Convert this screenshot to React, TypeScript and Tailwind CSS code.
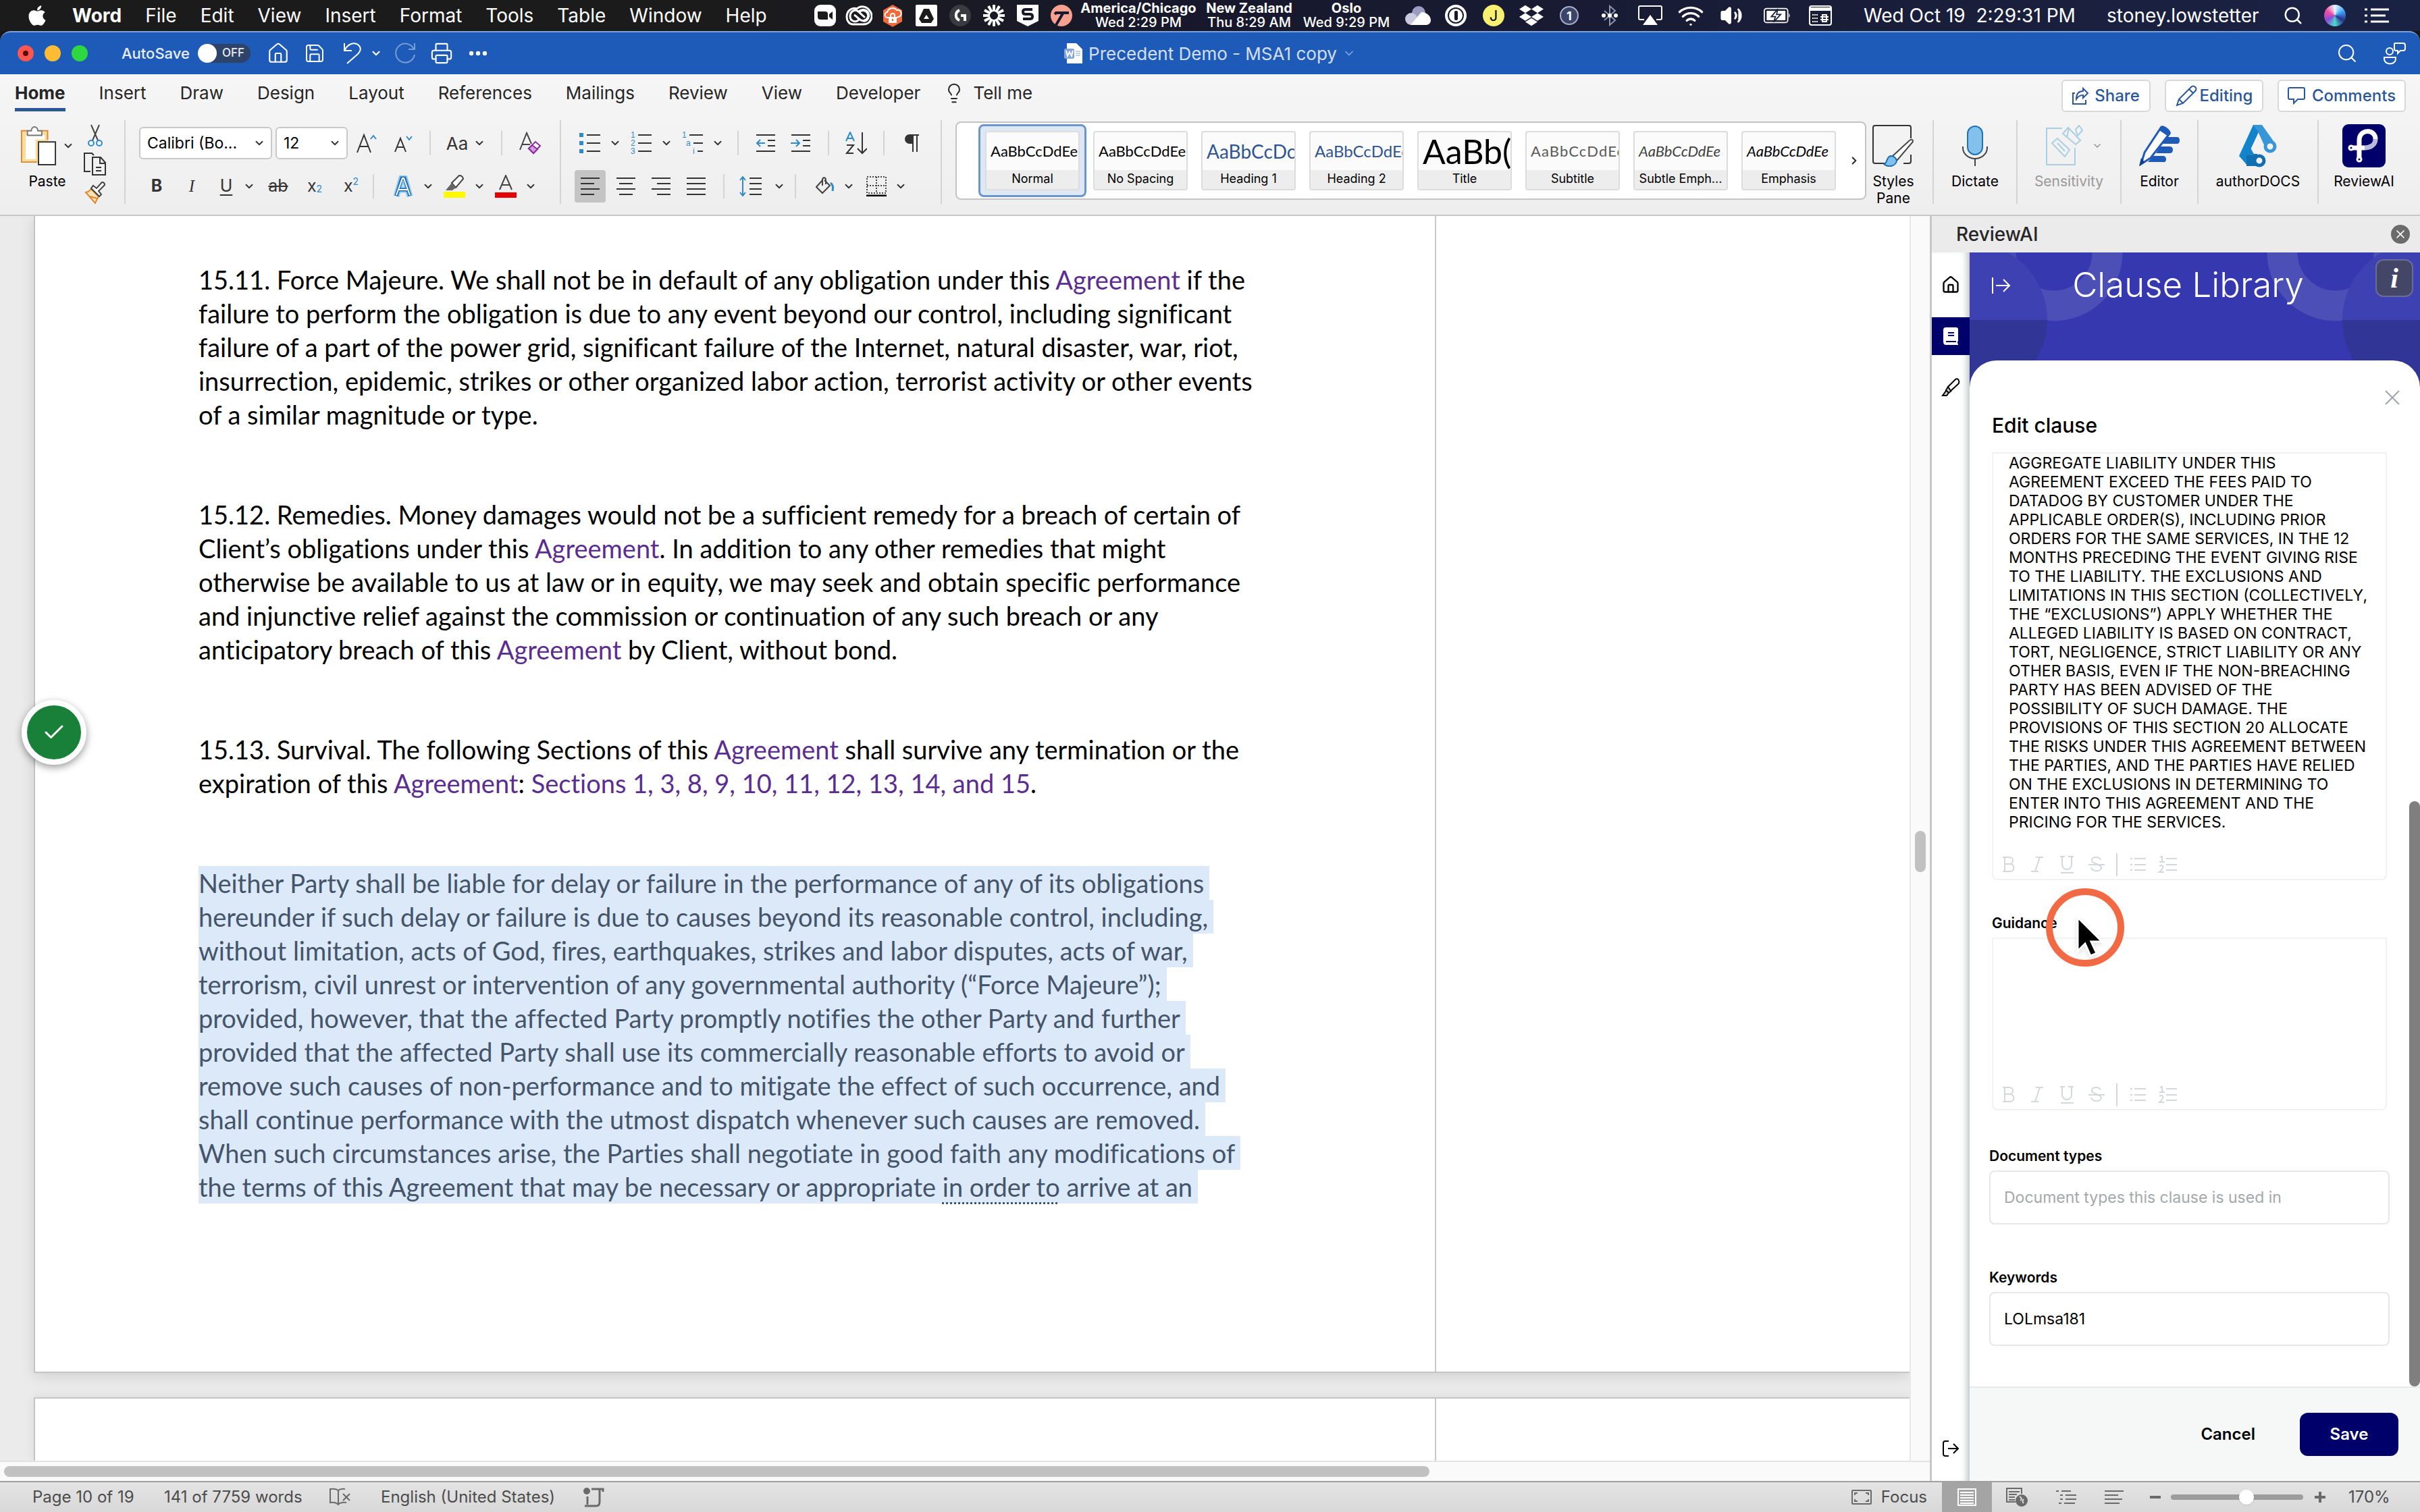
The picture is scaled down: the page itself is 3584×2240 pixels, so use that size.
import { useState } from "react";
import type { ReactNode } from "react";
import {
  Check,
  ChevronDown,
  Ellipsis,
  House,
  Lightbulb,
  Printer,
  Save,
  Search,
  Volume2,
  Wifi,
  X,
} from "lucide-react";
import { FaApple, FaDropbox } from "react-icons/fa";

const MENUS = ["File", "Edit", "View", "Insert", "Format", "Tools", "Table", "Window", "Help"];

const TABS = [
  "Home",
  "Insert",
  "Draw",
  "Design",
  "Layout",
  "References",
  "Mailings",
  "Review",
  "View",
  "Developer",
];

const CLOCKS = [
  { city: "America/Chicago", time: "Wed 2:29 PM", width: "w-[172px]" },
  { city: "New Zealand", time: "Thu 8:29 AM", width: "w-[132px]" },
  { city: "Oslo", time: "Wed 9:29 PM", width: "w-[132px]" },
];

const STYLES = [
  { name: "Normal", sample: "AaBbCcDdEe", look: "text-[22px] text-black" },
  { name: "No Spacing", sample: "AaBbCcDdEe", look: "text-[22px] text-black" },
  { name: "Heading 1", sample: "AaBbCcDc", look: "text-[28px] text-[#2f5496]" },
  { name: "Heading 2", sample: "AaBbCcDdEe", look: "text-[24px] text-[#2f5496]" },
  { name: "Title", sample: "AaBb(", look: "text-[50px] text-black" },
  { name: "Subtitle", sample: "AaBbCcDdEe", look: "text-[22px] tracking-wider text-[#5a5a5a]" },
  { name: "Subtle Emph...", sample: "AaBbCcDdEe", look: "text-[22px] italic text-[#404040]" },
  { name: "Emphasis", sample: "AaBbCcDdEe", look: "text-[22px] italic text-black" },
];

const CLAUSE = `AGGREGATE LIABILITY UNDER THIS
AGREEMENT EXCEED THE FEES PAID TO
DATADOG BY CUSTOMER UNDER THE
APPLICABLE ORDER(S), INCLUDING PRIOR
ORDERS FOR THE SAME SERVICES, IN THE 12
MONTHS PRECEDING THE EVENT GIVING RISE
TO THE LIABILITY. THE EXCLUSIONS AND
LIMITATIONS IN THIS SECTION (COLLECTIVELY,
THE “EXCLUSIONS”) APPLY WHETHER THE
ALLEGED LIABILITY IS BASED ON CONTRACT,
TORT, NEGLIGENCE, STRICT LIABILITY OR ANY
OTHER BASIS, EVEN IF THE NON-BREACHING
PARTY HAS BEEN ADVISED OF THE
POSSIBILITY OF SUCH DAMAGE. THE
PROVISIONS OF THIS SECTION 20 ALLOCATE
THE RISKS UNDER THIS AGREEMENT BETWEEN
THE PARTIES, AND THE PARTIES HAVE RELIED
ON THE EXCLUSIONS IN DETERMINING TO
ENTER INTO THIS AGREEMENT AND THE
PRICING FOR THE SERVICES.`;

const SELECTED_LINES: ReactNode[] = [
  "Neither Party shall be liable for delay or failure in the performance of any of its obligations",
  "hereunder if such delay or failure is due to causes beyond its reasonable control, including,",
  "without limitation, acts of God, fires, earthquakes, strikes and labor disputes, acts of war,",
  "terrorism, civil unrest or intervention of any governmental authority (“Force Majeure”);",
  "provided, however, that the affected Party promptly notifies the other Party and further",
  "provided that the affected Party shall use its commercially reasonable efforts to avoid or",
  "remove such causes of non-performance and to mitigate the effect of such occurrence, and",
  "shall continue performance with the utmost dispatch whenever such causes are removed.",
  "When such circumstances arise, the Parties shall negotiate in good faith any modifications of",
  <>
    the terms of this Agreement that may be necessary or appropriate{" "}
    <span className="underline decoration-dotted decoration-[#44546a] decoration-3 underline-offset-8">
      in order to
    </span>{" "}
    arrive at an
  </>,
];

function Ref({ children }: { children: ReactNode }) {
  return <span className="text-[#5c2d91]">{children}</span>;
}

/* ---------- menu bar ---------- */

function Slot({ children }: { children: ReactNode }) {
  return <span className="flex w-10 shrink-0 items-center justify-center">{children}</span>;
}

function MenuBar() {
  return (
    <header className="flex h-[46px] shrink-0 items-center bg-gradient-to-r from-[#1b1b1c] from-30% via-[#17182c] via-50% to-[#1a2244] text-[28px] text-white">
      <nav className="flex flex-1 items-center gap-[35px] pl-[38px] whitespace-nowrap">
        <FaApple size={34} />
        <span className="font-bold">Word</span>
        {MENUS.map((m) => (
          <span key={m}>{m}</span>
        ))}
      </nav>
      <div className="flex gap-[10px]">
        <Slot>
          <svg width="32" height="32" viewBox="0 0 32 32">
            <rect width="32" height="32" rx="9" fill="#fff" />
            <path d="M5 10h11q4 0 4 4v8H9q-4 0-4-4z" fill="#1b1b1c" />
            <path d="M22 14l5-4v12l-5-4z" fill="#1b1b1c" />
          </svg>
        </Slot>
        <Slot>
          <svg width="40" height="30" viewBox="0 0 40 30" fill="none" stroke="#fff">
            <path d="M11 28h16a12 12 0 0 0 9-20C32 1 22 0 17 5 10 2 2 8 2 17c0 6 4 11 9 11z" strokeWidth="3" />
            <path d="M27 23a8 8 0 1 0-7-13" strokeWidth="4" />
            <path d="M29 18L19 9c-5-4-12 0-12 7 0 8 9 10 13 5M27 23c-6 0-9-6-14-9" strokeWidth="3" />
          </svg>
        </Slot>
        <Slot>
          <svg width="30" height="34" viewBox="0 0 30 34">
            <path d="M15 1l14 8v17l-14 8-14-8V9z" fill="#f26a3c" />
            <path
              d="M9 20H8a4 4 0 0 1-1-8 8 8 0 0 1 14-3 5 5 0 0 1 3 10l-3 1"
              fill="none"
              stroke="#fff"
              strokeWidth="2"
            />
            <rect x="9" y="19" width="12" height="9" fill="#fff" />
            <path d="M12 19v-2a3 3 0 0 1 6 0v2" fill="none" stroke="#fff" strokeWidth="2" />
            <path d="M15 22v3" stroke="#f26a3c" strokeWidth="2" />
          </svg>
        </Slot>
        <Slot>
          <svg width="32" height="32" viewBox="0 0 32 32">
            <rect width="32" height="32" rx="2" fill="#fff" />
            <path d="M12 6h8l7 15-4 6H9l-4-6z" fill="#1b1b1c" />
            <path d="M16 15l4 6h-8z" fill="#fff" />
          </svg>
        </Slot>
        <Slot>
          <svg width="32" height="32" viewBox="0 0 32 32" fill="none" stroke="#fff" strokeWidth="4">
            <circle cx="16" cy="16" r="16" fill="#3a3a42" stroke="none" />
            <path d="M15 8a8 8 0 0 0 0 15M17 16h6v8" />
          </svg>
        </Slot>
        <Slot>
          <svg width="34" height="34" viewBox="0 0 34 34" stroke="#fff" strokeWidth="4">
            <path d="M17 1v10M17 23v10M1 17h10M23 17h10M9 3l5 9M20 22l5 9M3 9l9 5M22 20l9 5M31 9l-9 5M12 20l-9 5M25 3l-5 9M14 22l-5 9" />
          </svg>
        </Slot>
        <Slot>
          <svg width="32" height="32" viewBox="0 0 32 32">
            <path d="M0 0h32v24l-16 8L0 24z" fill="#fff" />
            <path
              d="M23 7H13q-4 0-4 3v1q0 3 4 3h6q4 0 4 3v1q0 3-4 3H9"
              fill="none"
              stroke="#17182c"
              strokeWidth="4"
            />
          </svg>
        </Slot>
        <Slot>
          <svg width="32" height="32" viewBox="0 0 32 32">
            <circle cx="16" cy="16" r="16" fill="#f7a08f" />
            <path d="M6 14l2-2h19M18 13L8 30" fill="none" stroke="#17182c" strokeWidth="4" />
          </svg>
        </Slot>
      </div>
      <div className="ml-2 flex gap-3 text-center text-[20px] leading-[21px] whitespace-nowrap">
        {CLOCKS.map((c) => (
          <div key={c.city} className={c.width}>
            <div className="font-bold">{c.city}</div>
            <div className="font-medium">{c.time}</div>
          </div>
        ))}
      </div>
      <div className="ml-5 flex gap-4">
        <Slot>
          <svg width="38" height="28" viewBox="0 0 38 28">
            <circle cx="20" cy="10" r="10" fill="#9a9cc0" />
            <circle cx="9" cy="19" r="9" fill="#c9cae0" />
            <path d="M8 28L24 9c8 0 14 6 14 12 0 4-3 7-7 7z" fill="#fff" />
          </svg>
        </Slot>
        <Slot>
          <svg width="32" height="32" viewBox="0 0 32 32">
            <circle cx="16" cy="16" r="14" fill="none" stroke="#fff" strokeWidth="4" />
            <circle cx="16" cy="16" r="10" fill="#fff" />
            <rect x="14" y="9" width="5" height="14" rx="2" fill="#17182c" />
          </svg>
        </Slot>
        <Slot>
          <span className="flex size-8 items-center justify-center rounded-full bg-[#f8f070] text-[22px] text-black">J</span>
        </Slot>
        <Slot>
          <FaDropbox size={36} />
        </Slot>
        <Slot>
          <span className="flex size-7 items-center justify-center rounded-full border-2 border-[#a9b0c8] bg-[#3a4468] text-[18px] font-bold">
            1
          </span>
        </Slot>
      </div>
      <div className="ml-5 flex gap-5">
        <Slot>
          <svg width="26" height="32" viewBox="0 0 26 32" stroke="#8d93ad" strokeWidth="2" fill="none">
            <path d="M5 9l16 14-8 7V2l8 7L5 23" />
            <g fill="#fff" stroke="none">
              <circle cx="4" cy="16" r="3" />
              <circle cx="13" cy="16" r="3" />
              <circle cx="22" cy="16" r="3" />
            </g>
          </svg>
        </Slot>
        <Slot>
          <svg width="36" height="30" viewBox="0 0 36 30">
            <path d="M9 21H3q-2 0-2-2V3q0-2 2-2h30q2 0 2 2v16q0 2-2 2h-6" fill="none" stroke="#fff" strokeWidth="2" />
            <path d="M18 14l11 15H7z" fill="#fff" />
          </svg>
        </Slot>
        <Slot>
          <Wifi size={40} strokeWidth={2} />
        </Slot>
        <Slot>
          <Volume2 size={34} fill="#fff" strokeWidth={2} />
        </Slot>
      </div>
      <div className="ml-7 flex gap-6">
        <Slot>
          <svg width="46" height="26" viewBox="0 0 46 26">
            <rect x="1" y="1" width="40" height="24" rx="4" fill="none" stroke="#fff" strokeWidth="2" />
            <rect x="5" y="5" width="32" height="16" fill="#fff" />
            <path d="M43 9q3 4 0 8z" fill="#fff" />
            <path d="M24 2L13 15h7l-3 9 12-13h-7z" fill="#fff" stroke="#1a2040" strokeWidth="2" />
          </svg>
        </Slot>
        <Slot>
          <svg width="34" height="30" viewBox="0 0 34 30">
            <rect x="1" y="1" width="32" height="28" rx="3" fill="none" stroke="#fff" strokeWidth="2" />
            <path d="M1 3h32v5H1z" fill="#fff" />
            <path d="M5 14h8M5 19h8M5 24h8" stroke="#fff" strokeWidth="2" strokeDasharray="2 1" />
            <path d="M20 14h6v10h-6zM17 17h12M17 21h12" stroke="#fff" strokeWidth="2" fill="none" />
          </svg>
        </Slot>
      </div>
      <span className="ml-11 w-[324px] whitespace-pre">Wed Oct 19  2:29:31 PM</span>
      <span className="ml-9 w-[228px]">stoney.lowstetter</span>
      <div className="ml-7 flex gap-[22px] pr-11">
        <Slot>
          <Search size={30} />
        </Slot>
        <Slot>
          <span className="size-8 rounded-full bg-[conic-gradient(#e9f6ff,#3fa9f5,#2b2f8f,#4bd8d0,#8d4bd8,#f04fa0,#e9f6ff)]" />
        </Slot>
        <Slot>
          <svg width="36" height="22" viewBox="0 0 36 22" stroke="#fff" strokeWidth="3">
            <path d="M0 2h4M9 2h27M0 11h4M9 11h22M0 20h4M9 20h27" />
          </svg>
        </Slot>
      </div>
    </header>
  );
}

/* ---------- title bar ---------- */

function TitleBar() {
  const [autoSave, setAutoSave] = useState(false);
  return (
    <div className="flex h-16 shrink-0 items-center rounded-t-2xl border-t-2 border-[#7ba0da] bg-[#1e5ab8] text-white">
      <div className="flex flex-1 items-center">
        <div className="flex gap-4 pl-[26px]">
          <span className="flex size-6 items-center justify-center rounded-full bg-[#fc5650]">
            <span className="size-2 rounded-full bg-[#5c0a08]" />
          </span>
          <span className="size-6 rounded-full bg-[#fdbc34]" />
          <span className="size-6 rounded-full bg-[#2fd840]" />
        </div>
        <label className="ml-[50px] flex items-center gap-3 text-[22px] font-medium text-white/90">
          AutoSave
          <input
            type="checkbox"
            checked={autoSave}
            onChange={(e) => setAutoSave(e.target.checked)}
            className="sr-only"
          />
          <span className="flex h-7 w-[78px] items-center gap-2 rounded-full bg-[#2d4468] text-[17px]">
            <span className="size-7 rounded-full bg-white" />
            {autoSave ? "ON" : "OFF"}
          </span>
        </label>
        <div className="ml-[14px] flex items-center">
          <button className="flex w-[54px] justify-center" aria-label="Home">
            <House size={34} strokeWidth={1.5} />
          </button>
          <button className="flex w-[54px] justify-center" aria-label="Save">
            <Save size={32} strokeWidth={1.5} />
          </button>
          <button className="flex w-[80px] items-center justify-center gap-3 pl-2" aria-label="Undo">
            <svg width="28" height="32" viewBox="0 0 28 32" fill="none" stroke="#fff" strokeWidth="2">
              <path d="M2 1v11h11M2 12C7 2 16-1 22 3c6 5 4 10 0 14L6 31" />
            </svg>
            <ChevronDown size={18} strokeWidth={3} className="shrink-0" />
          </button>
          <button className="flex w-[54px] justify-center text-white/40" aria-label="Redo">
            <svg width="32" height="32" viewBox="0 0 32 32" fill="none" stroke="currentColor" strokeWidth="2">
              <path d="M30 1v9h-9M29 10A14 14 0 1 0 30 18" />
            </svg>
          </button>
          <button className="flex w-[54px] justify-center" aria-label="Print">
            <Printer size={34} strokeWidth={1.5} />
          </button>
          <button className="flex w-[54px] justify-center" aria-label="More">
            <Ellipsis size={34} strokeWidth={2.5} />
          </button>
        </div>
      </div>
      <div className="flex items-center gap-2 pl-5 text-[26px] whitespace-nowrap text-white/80">
        <svg width="28" height="30" viewBox="0 0 28 30">
          <path d="M4 0h14l9 9v21H4z" fill="#fff" />
          <path d="M17 12h7M17 15h7M17 18h7" stroke="#7f9fd8" />
          <rect y="8" width="15" height="15" rx="2" fill="#86a6da" />
          <path d="M3 11l2 8 3-6 3 6 2-8" fill="none" stroke="#fff" strokeWidth="2" />
        </svg>
        Precedent Demo - MSA1 copy
        <ChevronDown size={20} className="opacity-60" />
      </div>
      <div className="flex flex-1 items-center justify-end gap-9 pr-5">
        <Search size={32} strokeWidth={1.5} />
        <svg width="36" height="34" viewBox="0 0 36 34" fill="none" stroke="#fff" strokeWidth="2">
          <circle cx="11" cy="14" r="5" />
          <path d="M3 23h17v2c0 10-17 10-17 0z" />
          <path d="M19 2h12q3 0 3 3v5q0 3-3 3h-4l-4 4v-4h-3q-2 0-2-3V4q0-2 1-2z" />
        </svg>
      </div>
    </div>
  );
}

/* ---------- ribbon ---------- */

function Chev() {
  return <ChevronDown size={18} strokeWidth={2.5} className="shrink-0 text-[#333]" />;
}

function Tool({ label, w, children }: { label: string; w: string; children: ReactNode }) {
  return (
    <button aria-label={label} className={`flex h-12 shrink-0 items-center justify-center ${w}`}>
      {children}
    </button>
  );
}

function Bar() {
  return <span className="h-9 w-[2px] shrink-0 bg-[#d4d4d4]" />;
}

function GroupRule() {
  return <span className="h-[124px] w-[2px] shrink-0 bg-[#d4d4d4]" />;
}

function ListIcon({ kind }: { kind: "bullet" | "number" | "multi" }) {
  return (
    <svg width="32" height="44" viewBox="0 -6 32 44">
      {kind === "bullet" && (
        <>
          <path d="M0 1h6v6H0zM0 13h6v6H0zM0 25h6v6H0z" fill="#2e8bc8" />
          <path d="M11 4h20M11 16h20M11 28h20" stroke="#333" strokeWidth="2" />
        </>
      )}
      {kind === "number" && (
        <>
          <g fill="#2e8bc8" fontSize="12" fontFamily="Liberation Sans">
            <text x="0" y="8">1</text>
            <text x="0" y="20">2</text>
            <text x="0" y="32">3</text>
          </g>
          <path d="M11 4h20M11 16h20M11 28h20" stroke="#333" strokeWidth="2" />
        </>
      )}
      {kind === "multi" && (
        <>
          <g fill="#2e8bc8" fontSize="12" fontFamily="Liberation Sans">
            <text x="0" y="8">1</text>
            <text x="6" y="20">a</text>
            <text x="16" y="32">i</text>
          </g>
          <path d="M11 4h20M17 16h14M23 28h8" stroke="#333" strokeWidth="2" />
        </>
      )}
    </svg>
  );
}

function IndentIcon({ out }: { out?: boolean }) {
  return (
    <svg width="30" height="28" viewBox="0 0 30 28" fill="none" stroke="#333" strokeWidth="2">
      <path d="M1 2h28M18 10h11M18 18h11M1 26h28" />
      {out ? (
        <path d="M14 14H2M7 9l-5 5 5 5" stroke="#2e8bc8" />
      ) : (
        <path d="M0 14h12M8 9l5 5-5 5" stroke="#2e8bc8" />
      )}
    </svg>
  );
}

function ClipboardGroup() {
  return (
    <div className="flex w-[184px] shrink-0 gap-[14px] pt-[6px] pl-[30px]">
      <button className="flex w-20 flex-col items-center gap-2 text-[21px] leading-[25px]">
        <span className="flex h-16 w-20 items-center gap-2">
          <svg width="56" height="62" viewBox="0 0 56 62" fill="none">
            <path d="M6 12h34v12H26v30H6z" fill="#fff" stroke="#fbdc98" strokeWidth="5" />
            <path d="M12 8H2v48h24M32 8h10v14" stroke="#e0862c" strokeWidth="2" />
            <path d="M11 15V8h6a5 6 0 0 1 10 0h6v7z" fill="#fff" stroke="#777" strokeWidth="2" />
            <path d="M28 25h26v35H28z" fill="#fff" stroke="#333" strokeWidth="2" />
          </svg>
          <Chev />
        </span>
        Paste
      </button>
      <div className="flex flex-col gap-2">
        <svg width="34" height="34" viewBox="0 0 34 34" fill="none" strokeWidth="2">
          <path d="M11 1l10 23M23 1L13 24" stroke="#444" />
          <circle cx="11" cy="28" r="4" stroke="#2e8bc8" />
          <circle cx="23" cy="28" r="4" stroke="#2e8bc8" />
        </svg>
        <svg width="34" height="34" viewBox="0 0 34 34" fill="none" stroke="#333" strokeWidth="2">
          <path d="M10 28H1V1h11l3 3" />
          <path d="M13 7h12l7 8v18H13zM24 7v9h8M18 22h8M18 27h8" />
        </svg>
        <svg width="34" height="34" viewBox="0 0 34 34" fill="none" strokeWidth="2">
          <path d="M3 17q5-1 8-5l11 11q-3 5-5 10z" fill="#fde3b4" stroke="#e0862c" />
          <path d="M9 23l11 3" stroke="#e0862c" />
          <path d="M11 11l12 12 3-3-4-5 9-9q0-4-4-4l-8 9-5-4z" fill="#fff" stroke="#444" />
        </svg>
      </div>
    </div>
  );
}

function FontGroup() {
  return (
    <div className="flex w-[643px] shrink-0 flex-col gap-4 pt-[10px] pl-5">
      <div className="flex items-center text-[23px]">
        <select
          aria-label="Font"
          className="h-12 w-[197px] shrink-0 appearance-none rounded-md border-2 border-[#c9c9c9] bg-white pl-[10px]"
        >
          <option>Calibri (Bo...</option>
        </select>
        <span className="-ml-7 flex w-7">
          <Chev />
        </span>
        <select
          aria-label="Font size"
          className="ml-[5px] h-12 w-[107px] shrink-0 appearance-none rounded-md border-2 border-[#c9c9c9] bg-white pl-[10px]"
        >
          <option>12</option>
        </select>
        <span className="-ml-7 flex w-7">
          <Chev />
        </span>
        <Tool label="Grow font" w="w-[58px]">
          <svg width="32" height="30" viewBox="0 0 32 30" fill="none" stroke="#333" strokeWidth="2">
            <path d="M1 29L11 3l10 26M5 20h12" />
            <path d="M21 9l4-5 4 5" stroke="#2e8bc8" />
          </svg>
        </Tool>
        <Tool label="Shrink font" w="w-[50px]">
          <svg width="28" height="28" viewBox="0 0 28 28" fill="none" stroke="#333" strokeWidth="2">
            <path d="M1 27L9 7l8 20M4 20h10" />
            <path d="M18 4l4 5 4-5" stroke="#2e8bc8" />
          </svg>
        </Tool>
        <span className="w-[13px]" />
        <Bar />
        <Tool label="Change case" w="w-[104px] gap-2 text-[26px] text-[#333]">
          Aa
          <Chev />
        </Tool>
        <Bar />
        <Tool label="Clear formatting" w="w-[84px]">
          <svg width="34" height="34" viewBox="0 0 34 34" fill="none" stroke="#444" strokeWidth="2">
            <path d="M1 27L11 2l7 16M4 19h12" />
            <path d="M14 25l10-10 7 6-10 11z" fill="#fff" stroke="#8b2aa0" />
            <path d="M14 25l5-5 8 6-6 6z" fill="#d59ae0" stroke="#8b2aa0" />
          </svg>
        </Tool>
      </div>
      <div className="flex items-center text-[25px] text-[#333]">
        <Tool label="Bold" w="w-[52px] font-bold">B</Tool>
        <Tool label="Italic" w="w-[52px] font-[Liberation_Serif] italic">I</Tool>
        <Tool label="Underline" w="w-[76px] gap-4 pl-2">
          <span className="underline underline-offset-4">U</span>
          <Chev />
        </Tool>
        <Tool label="Strikethrough" w="w-[52px] line-through">ab</Tool>
        <Tool label="Subscript" w="w-[56px]">
          x<sub className="text-[14px] text-[#2e8bc8]">2</sub>
        </Tool>
        <Tool label="Superscript" w="w-[52px]">
          x<sup className="text-[14px] text-[#2e8bc8]">2</sup>
        </Tool>
        <span className="w-[6px]" />
        <Bar />
        <Tool label="Text effects" w="w-[76px] ml-5 gap-3">
          <svg width="32" height="32" viewBox="0 0 32 32" fill="none">
            <path d="M6 31L14 3h4l8 28M9 21h14" stroke="#8cc8f0" strokeWidth="9" />
            <path d="M6 30L14 4h4l8 26M9 21h14" stroke="#1f6cb0" strokeWidth="5" />
            <path d="M6 29L15 4h2l9 25M9 21h14" stroke="#fff" strokeWidth="2" />
          </svg>
          <Chev />
        </Tool>
        <Tool label="Highlight" w="w-[76px] gap-3">
          <svg width="32" height="34" viewBox="0 0 32 34">
            <path d="M0 25h32v9H0z" fill="#fff800" />
            <path d="M12 12L23 1q5 0 6 5L18 19z" fill="#fff" stroke="#444" strokeWidth="2" />
            <path d="M12 12l6 7-5 4H3z" fill="#666" />
          </svg>
          <Chev />
        </Tool>
        <Tool label="Font colour" w="w-[76px] gap-3">
          <svg width="32" height="34" viewBox="0 0 32 34">
            <path d="M0 26h32v8H0z" fill="#e60000" />
            <path d="M7 22L16 1l9 21M10 15h12" fill="none" stroke="#444" strokeWidth="2" />
          </svg>
          <Chev />
        </Tool>
      </div>
    </div>
  );
}

function AlignIcon({ d }: { d: string }) {
  return (
    <svg width="30" height="28" viewBox="0 0 30 28" stroke="#333" strokeWidth="2">
      <path d={d} />
    </svg>
  );
}

function ParagraphGroup() {
  return (
    <div className="flex w-[562px] shrink-0 flex-col gap-4 pt-[10px] pl-5">
      <div className="flex items-center">
        <Tool label="Bullets" w="w-[76px] gap-3">
          <ListIcon kind="bullet" />
          <Chev />
        </Tool>
        <Tool label="Numbering" w="w-[76px] gap-3">
          <ListIcon kind="number" />
          <Chev />
        </Tool>
        <Tool label="Multilevel list" w="w-[76px] gap-3">
          <ListIcon kind="multi" />
          <Chev />
        </Tool>
        <span className="w-[13px]" />
        <Bar />
        <span className="w-[14px]" />
        <Tool label="Decrease indent" w="w-[52px]">
          <IndentIcon out />
        </Tool>
        <Tool label="Increase indent" w="w-[52px]">
          <IndentIcon />
        </Tool>
        <span className="w-[14px]" />
        <Bar />
        <Tool label="Sort" w="w-[80px]">
          <svg width="32" height="34" viewBox="0 0 32 34" fill="none" strokeWidth="2">
            <path d="M1 14L7 1l6 13M3 10h8" stroke="#2e8bc8" />
            <path d="M2 20h10L2 32h10M25 1v30M18 25l7 7 7-7" stroke="#333" />
          </svg>
        </Tool>
        <Bar />
        <Tool label="Show marks" w="w-[80px]">
          <svg width="22" height="26" viewBox="0 0 22 26">
            <path d="M12 14H8A7 7 0 0 1 8 0h4z" fill="#333" />
            <path d="M13 0v26M19 0v26M8 1h14" stroke="#333" strokeWidth="2" />
          </svg>
        </Tool>
      </div>
      <div className="flex items-center text-[#333]">
        <Tool label="Align left" w="w-[46px] rounded bg-[#c4c4c4]">
          <AlignIcon d="M1 2h28M1 10h20M1 18h28M1 26h20" />
        </Tool>
        <Tool label="Centre" w="w-[52px] ml-1">
          <AlignIcon d="M1 2h28M5 10h20M1 18h28M5 26h20" />
        </Tool>
        <Tool label="Align right" w="w-[52px]">
          <AlignIcon d="M1 2h28M9 10h20M1 18h28M9 26h20" />
        </Tool>
        <Tool label="Justify" w="w-[52px]">
          <AlignIcon d="M1 2h28M1 10h28M1 18h28M1 26h28" />
        </Tool>
        <span className="w-[14px]" />
        <Bar />
        <Tool label="Line spacing" w="w-[104px] gap-4 pl-2">
          <svg width="34" height="30" viewBox="0 0 34 30" fill="none" strokeWidth="2">
            <path d="M5 1v28M1 6l4-5 4 5M1 24l4 5 4-5" stroke="#2e8bc8" />
            <path d="M15 3h18M15 11h18M15 19h18M15 27h18" stroke="#333" />
          </svg>
          <Chev />
        </Tool>
        <Bar />
        <Tool label="Shading" w="w-[76px] ml-5 gap-3">
          <svg width="28" height="28" viewBox="0 0 28 28" fill="none" stroke="#444" strokeWidth="2">
            <path d="M10 3v10M10 5L1 15l9 9 11-11-8-8" />
            <path d="M10 5c0-5 5-5 5 0v6" />
            <path d="M22 9c4 3 4 6 3 12" stroke="#2e8bc8" strokeWidth="3" />
          </svg>
          <Chev />
        </Tool>
        <Tool label="Borders" w="w-[76px] gap-3">
          <svg width="30" height="30" viewBox="0 0 30 30" fill="none" stroke="#444" strokeWidth="2">
            <path d="M1 1h28v24H1zM15 1v24M1 14h28" strokeDasharray="2 2" />
            <path d="M0 29h30" stroke="#000" strokeWidth="3" />
          </svg>
          <Chev />
        </Tool>
      </div>
    </div>
  );
}

function StyleGallery() {
  return (
    <div className="mt-[2px] ml-5 flex h-[116px] min-w-0 flex-1 items-center rounded-lg border-2 border-[#c4c4c4] bg-white pl-8">
      {STYLES.map((s, i) => (
        <button
          key={s.name}
          className={
            i === 0
              ? "h-[108px] w-40 shrink-0 rounded-lg border-[3px] border-[#6d95cc] bg-[#dde8f4] p-[7px]"
              : "h-[108px] w-40 shrink-0 p-[10px]"
          }
        >
          <span className="flex h-full flex-col overflow-hidden rounded border-2 border-[#dcdcdc] bg-[#fbfbfb]">
            <span
              className={`flex flex-1 items-center overflow-hidden pl-[6px] font-[Lato] leading-none whitespace-nowrap ${s.look}`}
            >
              {s.sample}
            </span>
            <span className="h-7 bg-[#ededed] text-center text-[18px] leading-[26px] whitespace-nowrap">{s.name}</span>
          </span>
        </button>
      ))}
      <ChevronDown size={18} strokeWidth={3} className="m-auto -rotate-90 text-[#333]" />
    </div>
  );
}

function BigTool({ label, w, muted, children }: { label: string; w: string; muted?: boolean; children: ReactNode }) {
  return (
    <button
      className={`flex shrink-0 flex-col items-center gap-2 pt-[6px] text-[21px] leading-[25px] ${w} ${muted ? "text-[#999]" : ""}`}
    >
      <span className="flex h-16 items-center">{children}</span>
      {label}
    </button>
  );
}

function Ribbon() {
  return (
    <div className="shrink-0 border-b-2 border-[#c8c8c8] bg-gradient-to-b from-[#f6f6f6] to-[#eeeeee]">
      <div className="flex h-[68px] items-start pt-2 pr-[21px] pl-[22px] text-[#262626]">
        <nav className="flex flex-1 items-center gap-[50px] text-[26px] leading-10 whitespace-nowrap">
          {TABS.map((t, i) => (
            <a
              key={t}
              href="#"
              className={
                i === 0
                  ? "border-b-[5px] border-[#2b579a] pb-[2px] font-bold"
                  : "border-b-[5px] border-transparent pb-[2px]"
              }
            >
              {t}
            </a>
          ))}
          <a href="#" className="-ml-4 flex items-center gap-3 border-b-[5px] border-transparent pb-[2px]">
            <Lightbulb size={32} strokeWidth={1.5} />
            Tell me
          </a>
        </nav>
        <div className="flex gap-[21px] text-[24px] font-medium text-[#2b579a]">
          <button className="flex h-12 w-[132px] items-center justify-center gap-2 rounded-md border-2 border-[#d8d8d8] bg-white">
            <svg width="25" height="26" viewBox="0 0 25 26" fill="none" stroke="currentColor" strokeWidth="2">
              <path d="M4 9H1v16h19v-6" />
              <path d="M16 2l7 7-7 7v-4c-5 0-7 2-10 6 0-7 3-12 10-12z" />
            </svg>
            Share
          </button>
          <button className="flex h-12 w-[146px] items-center justify-center gap-1 rounded-md border-2 border-[#d8d8d8] bg-white">
            <svg width="32" height="32" viewBox="0 0 32 32" fill="none" stroke="currentColor" strokeWidth="2">
              <path d="M2 30l3-9L23 3q3-3 6 0t0 6L11 27zM20 6l6 6M5 21l6 6" />
            </svg>
            Editing
          </button>
          <button className="flex h-12 w-[190px] items-center justify-center gap-[10px] rounded-md border-2 border-[#d8d8d8] bg-white">
            <svg width="26" height="26" viewBox="0 0 26 26" fill="none" stroke="currentColor" strokeWidth="2">
              <path d="M3 1h20q2 0 2 2v13q0 2-2 2h-8l-6 6v-6H3q-2 0-2-2V3q0-2 2-2z" />
            </svg>
            Comments
          </button>
        </div>
      </div>
      <div className="flex h-[140px] items-start">
        <ClipboardGroup />
        <GroupRule />
        <FontGroup />
        <GroupRule />
        <ParagraphGroup />
        <GroupRule />
        <StyleGallery />
        <BigTool label="Styles Pane" w="w-[80px]">
          <svg width="64" height="62" viewBox="0 0 64 62" fill="none" strokeWidth="2">
            <path d="M58 20V4q0-3-3-3H5Q2 1 2 4v50q0 3 3 3h14M58 44v10q0 3-3 3h-8" stroke="#333" />
            <path d="M30 47L56 23q5-3 5 2L38 52z" fill="#fff" stroke="#444" />
            <path d="M18 58c6-2 3-10 10-12q7 0 9 7c-1 8-12 11-19 5z" fill="#7fc0ee" stroke="#1f6cb0" />
          </svg>
        </BigTool>
        <span className="w-[18px] shrink-0" />
        <GroupRule />
        <BigTool label="Dictate" w="w-[122px]">
          <svg width="38" height="60" viewBox="0 0 38 60" fill="none" strokeWidth="2">
            <rect x="8" y="1" width="22" height="42" rx="11" fill="#84c0ec" stroke="#2272b4" />
            <path d="M1 31v2a18 16 0 0 0 36 0v-2M19 49v11" stroke="#444" />
          </svg>
        </BigTool>
        <GroupRule />
        <BigTool label="Sensitivity" w="w-[152px]" muted>
          <span className="ml-4 flex items-center gap-3">
            <svg width="56" height="62" viewBox="0 0 56 62" fill="none" stroke="#aacfe0" strokeWidth="2">
              <path d="M24 5H1v54h42V34" />
              <path d="M9 27l8-7 18 17-7 10zM17 27l11 12" />
              <path d="M25 13l8-9 18 19-7 6zM34 5l-3 14M44 7l5-6 5 7-7 8z" />
            </svg>
            <ChevronDown size={16} strokeWidth={2.5} />
          </span>
        </BigTool>
        <GroupRule />
        <BigTool label="Editor" w="w-[112px]">
          <svg width="62" height="62" viewBox="0 0 62 62">
            <path
              d="M40 18h17q4 0 4 5t-4 5H34zM32 32h14q5 0 5 5t-5 5H26zM22 46h14q5 0 5 5t-5 4H14z"
              fill="#1e5ab8"
            />
            <path d="M34 3q8 0 12 10L18 49 4 58l5-17z" fill="#fff" stroke="#1e5ab8" strokeWidth="3" />
            <path d="M36 1q10 4 12 11l-4 5-13-9z" fill="#1e5ab8" />
            <path d="M4 49l5 6-8 6z" fill="#123f8c" />
          </svg>
        </BigTool>
        <GroupRule />
        <BigTool label="authorDOCS" w="w-[176px]">
          <svg width="58" height="64" viewBox="0 0 58 64">
            <path d="M22 1h13L15 44l8 18h-9L1 47z" fill="#1384cc" />
            <path d="M22 1h13l17 24-11 12-12-26z" fill="#3797d6" />
            <path d="M12 44h16v18H12z" fill="#0f6fb0" />
            <path d="M15 30l9 16H12z" fill="#1384cc" />
            <circle cx="47" cy="33" r="7" fill="#f2f2f2" stroke="#3797d6" strokeWidth="5" />
            <circle cx="31" cy="54" r="7" fill="#f2f2f2" stroke="#0f6fb0" strokeWidth="5" />
          </svg>
        </BigTool>
        <GroupRule />
        <BigTool label="ReviewAI" w="w-[134px] mr-4">
          <svg width="64" height="64" viewBox="0 0 64 64" fill="none">
            <rect width="64" height="64" rx="9" fill="#00006b" />
            <path d="M49 22c0 9-8 13-16 13" stroke="#b9b9dd" strokeWidth="7" />
            <path d="M25 50V24c0-18 24-17 24-2M33 35H14" stroke="#fff" strokeWidth="7" />
            <circle cx="25" cy="52" r="3" fill="#00006b" stroke="#fff" strokeWidth="3" />
            <circle cx="13" cy="35" r="3" fill="#00006b" stroke="#fff" strokeWidth="3" />
          </svg>
        </BigTool>
      </div>
    </div>
  );
}

/* ---------- document ---------- */

function DocumentArea() {
  return (
    <main className="flex min-w-0 flex-1 flex-col bg-[#fafafa]">
      <div className="flex min-h-0 flex-1">
        <div className="relative flex flex-1 flex-col overflow-hidden bg-[#ebebeb] pl-[50px]">
          <section className="flex border-b-2 border-l-2 border-[#c4c4c4] bg-white shadow-[0_4px_20px_rgba(0,0,0,0.12)]">
            <article className="flex flex-1 flex-col gap-[98px] pt-[69px] pb-[249px] pl-[242px] font-[Lato] text-[38px] leading-[50px] whitespace-nowrap text-black [font-variant-ligatures:none]">
              <p>
                15.11. Force Majeure. We shall not be in default of any obligation under this <Ref>Agreement</Ref> if the
                <br />
                failure to perform the obligation is due to any event beyond our control, including significant
                <br />
                failure of a part of the power grid, significant failure of the Internet, natural disaster, war, riot,
                <br />
                insurrection, epidemic, strikes or other organized labor action, terrorist activity or other events
                <br />
                of a similar magnitude or type.
              </p>
              <p>
                15.12. Remedies. Money damages would not be a sufficient remedy for a breach of certain of
                <br />
                Client’s obligations under this <Ref>Agreement</Ref>. In addition to any other remedies that might
                <br />
                otherwise be available to us at law or in equity, we may seek and obtain specific performance
                <br />
                and injunctive relief against the commission or continuation of any such breach or any
                <br />
                anticipatory breach of this <Ref>Agreement</Ref> by Client, without bond.
              </p>
              <p>
                15.13. Survival. The following Sections of this <Ref>Agreement</Ref> shall survive any termination or the
                <br />
                expiration of this <Ref>Agreement</Ref>: <Ref>Sections 1, 3, 8, 9, 10, 11, 12, 13, 14, and 15</Ref>.
              </p>
              <div className="text-[#44546a]">
                {SELECTED_LINES.map((line, i) => (
                  <p key={i} className="w-fit bg-[#dce9f8] pr-2">
                    {line}
                  </p>
                ))}
              </div>
            </article>
            <div className="w-[703px] border-l-2 border-[#c8c8c8]" />
          </section>
          <section className="mt-9 flex flex-1 border-t-2 border-l-2 border-[#c4c4c4] bg-white shadow-[0_0_16px_rgba(0,0,0,0.08)]">
            <div className="flex-1" />
            <div className="w-[703px] border-l-2 border-[#c8c8c8]" />
          </section>
          <span className="absolute top-[717px] left-8 flex size-24 items-center justify-center rounded-full border-8 border-white bg-[#188038] text-white shadow-[0_4px_12px_rgba(0,0,0,0.4)]">
            <Check size={36} strokeWidth={2} />
          </span>
        </div>
        <div className="flex w-[30px] flex-col items-center border-l-2 border-[#e8e8e8] pt-[911px]">
          <span className="h-[61px] w-4 rounded-full bg-[#c1c1c1]" />
        </div>
      </div>
      <div className="flex h-[30px] items-center border-t-2 border-[#e4e4e4] pl-[6px]">
        <span className="h-4 w-[2111px] rounded-full bg-[#c1c1c1]" />
      </div>
    </main>
  );
}

/* ---------- ReviewAI pane ---------- */

function EditorToolbar() {
  return (
    <svg width="264" height="34" viewBox="0 0 264 34" fill="none" stroke="#d4d8da" strokeWidth="2">
      <path d="M5 6h10a5 5 0 0 1 0 10H8h8a5 5 0 0 1 0 11H5M8 6v21" />
      <path d="M54 6h11M47 27h11M60 6l-7 21" />
      <path d="M90 5h7M102 5h8M93 5v12a7 7 0 0 0 14 0V5M91 29h19" />
      <path d="M150 10c-2-6-14-5-13 1 1 5 13 5 14 10 0 7-14 7-15 0M132 17h24" />
      <path d="M174 0v34" />
      <path d="M194 8h3M200 8h17M194 17h3M200 17h17M194 25h3M200 25h17" />
      <path d="M238 6l3-1v8M237 13h8M237 19c6-3 8 2 0 9h7M247 8h16M247 17h16M247 25h16" />
    </svg>
  );
}

function RichBox({ id, size, value, label }: { id: string; size: string; value: string; label?: string }) {
  return (
    <div className="rounded-b-lg border-2 border-[#f1f2f3]">
      <textarea
        id={id}
        defaultValue={value}
        aria-label={label}
        className={`block w-full resize-none overflow-hidden pl-[23px] text-[23px] leading-7 whitespace-pre outline-none ${size}`}
      />
      <div className="pt-1 pb-1 pl-[9px]">
        <EditorToolbar />
      </div>
    </div>
  );
}

function PaneHeader() {
  return (
    <div className="relative h-[200px] shrink-0 overflow-hidden bg-[#3638b0] text-white">
      <svg className="absolute inset-0" width="100%" height="200" viewBox="0 0 667 200" preserveAspectRatio="none">
        <g fill="none" stroke="#4c50b6" strokeWidth="45">
          <circle cx="125" cy="0" r="79" />
          <circle cx="542" cy="0" r="79" />
        </g>
        <circle cx="0" cy="100" r="115" fill="#3d41b1" />
        <circle cx="667" cy="100" r="115" fill="#3d41b1" />
        <path d="M0 100h115a115 115 0 0 1-115 115zM667 100H552a115 115 0 0 0 115 115z" fill="#303596" />
      </svg>
      <div className="relative flex items-start pt-[10px] pr-[10px] pl-8">
        <svg className="mt-[23px]" width="30" height="32" viewBox="0 0 30 32" fill="none" stroke="#fff" strokeWidth="2">
          <path d="M2 4v24M7 16h20M18 7l9 9-9 9" />
        </svg>
        <h1 className="flex-1 pt-[9px] pr-4 text-center text-[51px] leading-[58px] font-light">Clause Library</h1>
        <button
          aria-label="Info"
          className="size-14 rounded-xl border-2 border-[#6a6c98] bg-[#444668] font-[Liberation_Serif] text-[42px] leading-none font-bold italic"
        >
          i
        </button>
      </div>
    </div>
  );
}

function Rail() {
  return (
    <nav className="flex w-14 shrink-0 flex-col items-center bg-white pt-[20px] pb-9 shadow-[inset_-10px_0_12px_-8px_rgba(60,80,90,0.45)]">
      <a href="#" aria-label="Home" className="flex h-14 items-center">
        <House size={28} strokeWidth={2} />
      </a>
      <a href="#" aria-label="Clause library" className="mt-5 flex h-14 w-full items-center justify-center bg-[#00006b]">
        <svg width="24" height="26" viewBox="0 0 24 26">
          <path d="M5 0h15q3 0 3 3v17q-2 2 0 5v1H5q-4 0-4-5V4q0-4 4-4z" fill="#fff" />
          <path d="M8 8h9M8 12h9M5 21h15" stroke="#00006b" strokeWidth="2" />
        </svg>
      </a>
      <a href="#" aria-label="Draft" className="mt-5 flex h-14 items-center">
        <svg width="28" height="28" viewBox="0 0 28 28" fill="none" stroke="#000" strokeWidth="2">
          <path d="M10 13L21 2q4-2 5 2 1 3-1 5L14 19z" />
          <path d="M10 13l-3 5 4 4 4-3M7 19l-5 7h6l3-4" fill="#000" fillOpacity="0.2" />
        </svg>
      </a>
      <a href="#" aria-label="Sign out" className="mt-auto">
        <svg width="26" height="24" viewBox="0 0 26 24" fill="none" stroke="#000" strokeWidth="2">
          <path d="M10 1H5Q2 1 2 4v16q0 3 3 3h5M9 12h15M17 5l7 7-7 7" />
        </svg>
      </a>
    </nav>
  );
}

function ReviewPane() {
  return (
    <aside className="flex w-[726px] shrink-0 flex-col border-l-[3px] border-[#c8c8c8] bg-white">
      <div className="flex h-[54px] shrink-0 items-center justify-between bg-[#ebebeb] pr-[15px] pl-9 text-[28px] font-medium text-[#262626]">
        ReviewAI
        <button aria-label="Close pane" className="flex size-7 items-center justify-center rounded-full bg-[#6b6b6b] text-white">
          <X size={20} />
        </button>
      </div>
      <div className="flex min-h-0 flex-1">
        <Rail />
        <div className="flex min-w-0 flex-1 flex-col">
          <PaneHeader />
          <form
            className="relative -mt-10 flex min-h-0 flex-1 flex-col rounded-t-[40px] bg-white"
            onSubmit={(e) => e.preventDefault()}
          >
            <div className="flex justify-end pt-9 pr-[22px]">
              <button type="button" aria-label="Close" className="text-[#a0a4a8]">
                <X size={38} strokeWidth={1.25} />
              </button>
            </div>
            <h2 className="pt-1 pl-[33px] text-[30px] leading-9 font-medium">Edit clause</h2>
            <div className="mt-[22px] flex min-h-0 flex-1">
              <div className="min-w-0 flex-1 overflow-hidden pr-[29px] pl-[29px]">
                <div className="px-1">
                  <div className="-mt-[2px] pt-[2px]">
                    <RichBox id="clause" size="h-[588px]" value={CLAUSE} label="Clause text" />
                  </div>
                  <label htmlFor="guidance" className="mt-[52px] mb-[9px] block text-[21px] leading-6 font-semibold">
                    Guidance
                  </label>
                  <RichBox id="guidance" size="h-[210px]" value="" />
                </div>
                <label htmlFor="types" className="mt-14 mb-[9px] block text-[21px] leading-6 font-semibold">
                  Document types
                </label>
                <input
                  id="types"
                  placeholder="Document types this clause is used in"
                  className="h-20 w-full rounded-lg border-2 border-[#e6e7e8] px-5 text-[23px] placeholder:text-[#a4a8ab]"
                />
                <label htmlFor="keywords" className="mt-[67px] mb-[9px] block text-[21px] leading-6 font-semibold">
                  Keywords
                </label>
                <input
                  id="keywords"
                  defaultValue="LOLmsa181"
                  className="h-20 w-full rounded-lg border-2 border-[#e6e7e8] px-5 text-[23px]"
                />
              </div>
              <div className="flex w-4 flex-col justify-end">
                <span className="h-[867px] rounded-full bg-[#7f7f7f]" />
              </div>
            </div>
            <div className="flex h-[140px] shrink-0 items-center justify-end gap-[66px] border-t-2 border-[#e6e8e9] bg-[#f6f8f8] pr-8 text-[24px] font-semibold">
              <button type="button">Cancel</button>
              <button className="h-16 w-[146px] rounded-xl bg-[#00006b] text-white">Save</button>
            </div>
          </form>
        </div>
      </div>
    </aside>
  );
}

/* Click marker drawn round the pointer */
function Pointer() {
  return (
    <svg className="pointer-events-none absolute top-[1316px] right-[438px]" width="116" height="116" viewBox="0 0 116 116">
      <circle cx="58" cy="58" r="53" fill="none" stroke="#f26a43" strokeWidth="10" />
      <path
        d="M47 43v50l11-11 8 18 9-4-8-17h16z"
        fill="#000"
        stroke="#fff"
        strokeWidth="3"
        className="drop-shadow-md"
      />
    </svg>
  );
}

/* ---------- status bar ---------- */

function StatusBar() {
  const [zoom, setZoom] = useState(58);
  return (
    <footer className="flex h-[46px] shrink-0 items-center border-t-2 border-[#a0a0a0] bg-gradient-to-b from-[#e4e4e4] to-[#d8d8d8] pl-12 text-[24px] whitespace-nowrap text-[#4c4c4c]">
      <span className="w-[195px]">Page 10 of 19</span>
      <span className="w-[245px]">141 of 7759 words</span>
      <svg width="32" height="28" viewBox="0 0 32 28" fill="none" stroke="#6a6a6a" strokeWidth="2">
        <path d="M13 4q-4-3-12-2v20q8-1 12 3 3-4 12-3M13 4v21M13 4q3-3 10-2" />
        <path d="M20 9l10 10M30 9L20 19" />
      </svg>
      <span className="ml-11 w-[300px]">English (United States)</span>
      <svg width="32" height="30" viewBox="0 0 32 30" fill="none" stroke="#6a6a6a" strokeWidth="3">
        <circle cx="5" cy="6" r="5" fill="#6a6a6a" stroke="none" />
        <path d="M12 3h17v4M24 3v19q0 6-5 6H2M6 14v12" />
      </svg>
      <div className="ml-auto flex h-full items-center">
        <button className="flex items-center gap-[14px] pr-[22px]">
          <svg width="30" height="22" viewBox="0 0 30 22" fill="none" stroke="#6a6a6a" strokeWidth="2">
            <rect x="1" y="1" width="28" height="20" rx="1" />
            <path d="M5 8V5h4M21 5h4v3M5 14v3h4M21 17h4v-3" />
          </svg>
          Focus
        </button>
        <button aria-label="Print layout" className="flex h-full w-[74px] items-center justify-center bg-[#a4a4a4]">
          <svg width="28" height="26" viewBox="0 0 28 26" fill="none" stroke="#fff" strokeWidth="2">
            <path d="M1 1h26v24H1zM4 6h20M4 10h20M4 14h20M4 18h20M4 22h20" />
          </svg>
        </button>
        <button aria-label="Web layout" className="flex w-[74px] justify-center">
          <svg width="32" height="28" viewBox="0 0 32 28" fill="none" stroke="#6a6a6a" strokeWidth="2">
            <path d="M14 21H1V1h22v8M4 6h16M4 10h12M4 14h9M4 18h9" />
            <circle cx="23" cy="19" r="8" fill="#6a6a6a" />
            <path d="M20 13q5 3 1 6M26 17q-3 3 0 6" stroke="#dcdcdc" />
          </svg>
        </button>
        <button aria-label="Outline" className="flex w-[72px] justify-center">
          <svg width="30" height="22" viewBox="0 0 30 22" stroke="#6a6a6a" strokeWidth="2">
            <path d="M0 2h4M8 2h14M6 8h4M14 8h16M6 14h4M14 14h16M4 20h4M12 20h16" />
          </svg>
        </button>
        <button aria-label="Draft" className="flex w-[70px] justify-center">
          <svg width="28" height="22" viewBox="0 0 28 22" stroke="#6a6a6a" strokeWidth="2">
            <path d="M0 2h28M0 8h20M0 14h26M0 20h22" />
          </svg>
        </button>
        <button aria-label="Zoom out" className="ml-[18px] h-[4px] w-4 bg-[#6a6a6a]" />
        <input
          type="range"
          aria-label="Zoom"
          value={zoom}
          onChange={(e) => setZoom(Number(e.target.value))}
          className="mx-[15px] h-2 w-[196px] appearance-none rounded-full bg-[#9c9c9c] [&::-webkit-slider-thumb]:size-[22px] [&::-webkit-slider-thumb]:appearance-none [&::-webkit-slider-thumb]:rounded-full [&::-webkit-slider-thumb]:bg-white [&::-webkit-slider-thumb]:shadow"
        />
        <button aria-label="Zoom in" className="flex w-5 justify-center">
          <svg width="16" height="16" viewBox="0 0 16 16" stroke="#6a6a6a" strokeWidth="4">
            <path d="M8 0v16M0 8h16" />
          </svg>
        </button>
        <span className="ml-[32px] w-[106px]">170%</span>
      </div>
    </footer>
  );
}

export default function App() {
  return (
    <div className="relative flex h-screen flex-col overflow-hidden bg-[#15161c] font-[Inter,sans-serif] text-black">
      <MenuBar />
      <TitleBar />
      <Ribbon />
      <div className="flex min-h-0 flex-1">
        <DocumentArea />
        <ReviewPane />
      </div>
      <StatusBar />
      <Pointer />
    </div>
  );
}
